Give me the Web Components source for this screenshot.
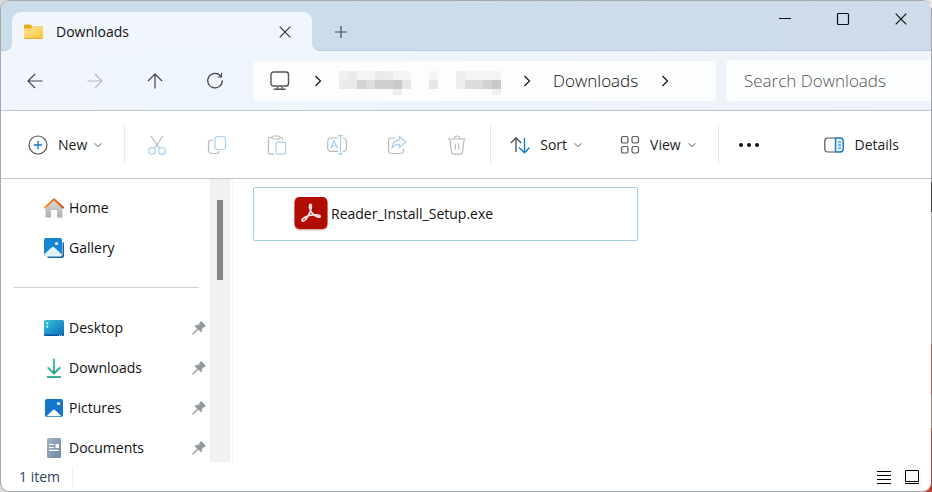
<!DOCTYPE html>
<html lang="en">
<head>
<meta charset="utf-8">
<title>Downloads</title>
<style>
html, body { height: 100%; margin: 0; }
body {
  font-family: "Open Sans", "Noto Sans", sans-serif; font-size: 14px; line-height: 20px; color: #1b1b1b;
  background: linear-gradient(#e6e6e6 8px, #a3a7ad 8px 37%, #3a3a3a 37% 43%, #a5a5a5 43% 70%, #a35555 70% 80%, #a87c7c 80% 87%, #c43c3c 87%) right / 12px 100% no-repeat, #dcdcdc;
}
</style>
</head>
<body>
<file-explorer></file-explorer>
<script>
const ICONS = {
  folder: [20, 16, `<defs><linearGradient id="g" x2="1" y2="1"><stop stop-color="#ffe49a"/><stop offset="1" stop-color="#fdc33a"/></linearGradient></defs><g stroke="none"><path d="M0 1.500Q0 .5 1 .5H6.500L8.500 2.500H18Q19 2.500 19 3.500V8H0Z" fill="#e9ac20"/><path d="M0 4.500H7L8.500 3H18Q19 3 19 4V14Q19 15 18 15H1Q0 15 0 14Z" fill="url(#g)"/></g><path d="M.3 14.500H18.700" stroke="#e8a92c" stroke-width="1"/>`],
  close: [12, 12, `<path d="M.7.7 11.300 11.300M11.300.7.7 11.300"/>`],
  plus: [14, 14, `<path d="M1 7H13M7 1V13"/>`],
  minimize: [12, 12, `<path d="M0 5.500H12"/>`],
  maximize: [14, 14, `<rect x="1.500" y="1.500" width="11" height="11" rx="1"/>`],
  back: [16, 16, `<path d="M15.500 8H1M8 1 1 8 8 15"/>`],
  forward: [16, 16, `<path d="M.5 8H15M8 1 15 8 8 15"/>`],
  up: [16, 16, `<path d="M8 15.500V1M1 8 8 1 15 8"/>`],
  refresh: [18, 18, `<path d="M14.800 4.200A7.300 7.300 0 1 0 16.300 8.300M15.500 1V5H11.500"/>`],
  monitor: [20, 20, `<rect x="1" y="1" width="17.500" height="14" rx="2.500" stroke-width="1.400"/><path d="M7.500 15.500V18M12 15.500V18M3.700 18.300H15.700" stroke-width="1.400"/>`],
  right: [8, 12, `<path d="M1.500 1 6.500 6 1.500 11"/>`],
  down: [8, 8, `<path d="M.7 2.300 4 5.700 7.300 2.300" stroke-width="1"/>`],
  add: [20, 20, `<circle cx="10" cy="10" r="9"/><path d="M10 5.800V14.200M5.800 10H14.200" stroke="#1478c8" stroke-width="1.300"/>`],
  cut: [20, 20, `<path d="M4 1 12.800 14M16 1 7.200 14"/><g stroke="#55a6e2"><circle cx="5" cy="16" r="3.300"/><circle cx="15" cy="16" r="3.300"/></g>`],
  copy: [20, 20, `<path d="M6 5H4Q1.500 5 1.500 8V15Q1.500 18.500 5 18.500H9Q12 18.500 12 16"/><rect x="8" y="1.500" width="10.500" height="13" rx="2.500" stroke="#55a6e2"/>`],
  paste: [20, 20, `<path d="M5 2.500H2.500Q1.500 2.500 1.500 3.500V18Q1.500 19.200 2.700 19.200H7M13 2.500H14.500Q15.500 2.500 15.500 3.500V5"/><rect x="5" y="1" width="8" height="3" rx="1.500"/><rect x="9" y="7.200" width="9.500" height="12" rx="1.500" stroke="#55a6e2"/>`],
  rename: [20, 20, `<path d="M11 3H4Q.7 3 .7 6.500V13Q.7 16.300 4 16.300H11M16 3Q19.400 3 19.400 6.500V13Q19.400 16.300 16 16.300"/><path d="M3.500 13.500 7 5.500 10.500 13.500M4.700 11H9.300M13.500 1V19M11 .7H16M11 19.200H16" stroke="#4fa4e0"/>`],
  share: [20, 20, `<path d="M8 3H4.500Q1.500 3 1.500 6V15Q1.500 18.500 5 18.500H13Q16.500 18.500 16.500 15V13.500"/><path d="M12.500 1.500 18.800 7 12.500 12.500V9.300Q8 9 5 12.500Q5.500 5.500 12.500 4.800Z" stroke="#4fa4e0"/>`],
  trash: [20, 20, `<path d="M1 4H19M7 4Q7 1 10 1T13 4M2.800 4 4.500 17Q4.800 19.200 7 19.200H13Q15.200 19.200 15.500 17L17.200 4M8.300 8.500V14.500M11.700 8.500V14.500"/>`],
  sort: [20, 20, `<path d="M6 17V3M.8 8 6 2.700 11.200 8" stroke-width="1.400"/><path d="M14.500 3V17.500M9 12.500 14.500 17.800 19.600 12.500" stroke="#1478c8" stroke-width="1.400"/>`],
  view: [20, 20, `<rect x="1.500" y="1.500" width="6.500" height="6.500" rx="1.700"/><rect x="12" y="1.500" width="6.500" height="6.500" rx="1.700"/><rect x="1.500" y="11.500" width="6.500" height="6.500" rx="1.700"/><rect x="12" y="11.500" width="6.500" height="6.500" rx="1.700"/>`],
  more: [22, 6, `<g fill="#111" stroke="none"><circle cx="3" cy="3" r="2"/><circle cx="11" cy="3" r="2"/><circle cx="19" cy="3" r="2"/></g>`],
  details: [20, 18, `<path d="M11 2H4Q.8 2 .8 5V13Q.8 16 4 16H11"/><path d="M11.500 2H16Q19.200 2 19.200 5V13Q19.200 16 16 16H11.500Z" fill="#e3f2fd" stroke="#1478c8" stroke-width="1.400"/><path d="M14 6H17M14 9H17M14 12H17" stroke="#1478c8"/>`],
  home: [20, 20, `<defs><linearGradient id="g" x2="0" y2="1"><stop stop-color="#ddd"/><stop offset="1" stop-color="#aeaeae"/></linearGradient><linearGradient id="r" x2="1"><stop stop-color="#f39b35"/><stop offset="1" stop-color="#c9531c"/></linearGradient></defs><path d="M1.500 9 10 2 18.500 9V18.500Q18.500 19.500 17.500 19.500H13V12.500Q13 12 12.500 12H7.500Q7 12 7 12.500V19.500H2.500Q1.500 19.500 1.500 18.500Z" fill="url(#g)" stroke="none"/><path d="M1 9.500 10 1.300 19 9.500" stroke="url(#r)" stroke-width="2.200" stroke-linecap="round" stroke-linejoin="round"/>`],
  gallery: [20, 20, `<g stroke="none"><path d="M4 4H18.500Q20 4 20 5.500V18Q20 20 18 20H5Q3 20 3 18Z" fill="#14669f"/><rect width="18.500" height="18.500" rx="2" fill="#fff"/><rect width="18" height="18" rx="2" fill="#1585d6"/><path d="M0 16.500 7.800 9.300Q9 8.300 10.200 9.300L18 16.500Q17.500 18 16 18H2Q.5 18 0 16.500Z" fill="#e2f2fc"/><circle cx="12.600" cy="5.500" r="1.600" fill="#fff"/></g>`],
  desktop: [20, 16, `<defs><linearGradient id="g" x2="1" y2="1"><stop stop-color="#38c6dc"/><stop offset="1" stop-color="#0969b8"/></linearGradient></defs><g stroke="none"><rect width="20" height="16" rx="1.500" fill="url(#g)"/><path d="M0 14.500H20Q20 16 18.500 16H1.500Q0 16 0 14.500Z" fill="#075397"/><path d="M2.500 2.500H4.200V4.200H2.500ZM2.500 5.700H4.200V7.400H2.500ZM15 14.700H16V15.700H15ZM17 14.700H18V15.700H17Z" fill="#fff"/></g>`],
  download: [20, 20, `<defs><linearGradient id="g" gradientUnits="userSpaceOnUse" x1="0" y1="0" x2="0" y2="20"><stop stop-color="#3cc39b"/><stop offset="1" stop-color="#159b87"/></linearGradient></defs><path d="M10 .5 10.010 15M3.700 9.300 10 15.500 16.300 9.300" stroke="url(#g)" stroke-width="1.800"/><path d="M3 19H17" stroke="#24a88d" stroke-width="1.800"/>`],
  pictures: [20, 20, `<g stroke="none"><rect x="1" y="1" width="18" height="18" rx="2" fill="#1276cb"/><path d="M2.500 18.200 9 12Q10 11 11 12L17.500 18.200Z" fill="#fff"/><circle cx="14.500" cy="5.500" r="1.600" fill="#fff"/></g>`],
  documents: [20, 20, `<defs><linearGradient id="g" x2="1" y2="1"><stop stop-color="#a4b5c8"/><stop offset="1" stop-color="#6c86a3"/></linearGradient></defs><rect x="3" width="14" height="20" rx="1.500" fill="url(#g)" stroke="none"/><path d="M5 6.500H10M5 9.500H10M5 12.300H15" stroke="#fff"/><path d="M11.500 6H15V10H11.500Z" fill="#fff" stroke="none"/>`],
  pin: [14, 14, `<path d="M8.300.5Q9 0 9.600.5L13.300 4.300Q14 5 13.300 5.600L10.500 7 9.700 10.500Q9.300 11.500 8.500 10.800L6.200 8.700 1.500 13.500 .3 13.700 .5 12.500 5.200 7.700 3 5.400Q2.400 4.700 3.300 4.200L6.900 3.400Z" fill="#939ca3" stroke="none"/>`],
  acrobat: [34, 34, `<rect x=".5" y="1.500" width="33" height="32" rx="5" fill="#d9bcb9" stroke="none"/><rect x=".5" y="0" width="33" height="32" rx="5" fill="#b20b00" stroke="none"/><path d="M16.300 7.300C17.800 7 17.500 11 16.600 13.600C15 18 11.500 24.500 8.800 24C6.500 23.400 9.500 19.800 15.500 18.500C20 17.500 26 17.300 26.200 19.300C26.300 21.300 21.500 19.800 18.500 16.600C16 14 14.300 7.700 16.300 7.300Z" stroke="#f7e8e6" stroke-width="1.700"/>`],
  list: [14, 14, `<path d="M0 1.500H14M0 5.500H14M0 9.500H14M0 13.500H14" stroke-width="1"/>`],
  tiles: [14, 14, `<path d="M.5.5H13.500V11.500H.5ZM0 13.500H14" stroke-width="1"/>`]
};

const define = (name, markup) => {
  const template = document.createElement("template");
  template.innerHTML = `<style>*{box-sizing:border-box}button{font:inherit;color:inherit;background:none;border:0;margin:0;padding:0;border-radius:4px}</style>` + markup;
  customElements.define(name, class extends HTMLElement {
    constructor() {
      super();
      this.attachShadow({ mode: "open" }).append(template.content.cloneNode(true));
    }
  });
};

customElements.define("fx-icon", class extends HTMLElement {
  connectedCallback() {
    if (this.shadowRoot) return;
    const [w, h, body] = ICONS[this.getAttribute("name")];
    this.attachShadow({ mode: "open" }).innerHTML = `<style>:host{display:block;flex:none}svg{display:block}</style>
      <svg width="${w}" height="${h}" viewBox="0 0 ${w} ${h}" fill="none" stroke="currentColor" stroke-width="1.200" aria-hidden="true">${body}</svg>`;
  }
});

/* Blurred-out folder names: each hex pair is the grey level of one block */
customElements.define("fx-mosaic", class extends HTMLElement {
  connectedCallback() {
    if (this.shadowRoot) return;
    const rows = this.getAttribute("rows").split("/").map(r => r.split(" "));
    const rects = rows.map((r, y) => r.map((c, x) => c === "--" ? "" :
      `<rect x="${x * 9}" y="${y * 9}" width="9" height="${y === 2 ? 6 : 9}" fill="#${c + c + c}"/>`).join("")).join("");
    this.attachShadow({ mode: "open" }).innerHTML = `<style>:host{display:block;flex:none}svg{display:block}</style>
      <svg width="${rows[0].length * 9}" height="24" shape-rendering="crispEdges" aria-hidden="true">${rects}</svg>`;
  }
});

define("fx-tab", `<style>
  :host{display:flex;position:relative;width:300px;background:#f0f6fc;border-radius:9px 9px 0 0;align-items:center;padding:0 21px 0 12px;gap:12px}
  :host::before,:host::after{content:"";position:absolute;bottom:0;width:6px;height:6px}
  :host::before{right:100%;background:radial-gradient(circle at 0 0,transparent 5px,#f0f6fc 6px)}
  :host::after{left:100%;background:radial-gradient(circle at 100% 0,transparent 5px,#f0f6fc 6px)}
  span{flex:1;color:#111}
  button{color:#333}
  </style><fx-icon name="folder"></fx-icon><span><slot></slot></span><button aria-label="Close tab"><fx-icon name="close"></fx-icon></button>`);

define("fx-titlebar", `<style>
  :host{display:flex;height:50px;flex:none;background:linear-gradient(100deg,#c9dcea,#ccddec 50%,#cedbea);box-shadow:inset 0 -1px #bccbdb;padding-left:11px;align-items:stretch}
  fx-tab{margin-top:11px}
  .new{width:58px;margin-top:11px;display:grid;place-items:center;color:#4a4f55}
  .caption{margin:0 1px 0 auto;display:flex;height:36px}
  .caption button{width:58px;display:grid;place-items:center;color:#111}
  </style><fx-tab>Downloads</fx-tab><button class="new" aria-label="New tab"><fx-icon name="plus"></fx-icon></button>
  <div class="caption"><button aria-label="Minimize"><fx-icon name="minimize"></fx-icon></button><button aria-label="Maximize"><fx-icon name="maximize"></fx-icon></button><button aria-label="Close"><fx-icon name="close"></fx-icon></button></div>`);

define("fx-navbar", `<style>
  :host{display:flex;height:60px;flex:none;background:linear-gradient(90deg,#f0f6fc,#edf4fc 50%,#f0f3f9);border-bottom:1px solid #bfc8d2;align-items:center;padding-left:4px;font-size:17px;font-weight:300}
  .nav{width:60px;height:40px;display:grid;place-items:center;color:#444}
  .nav:disabled{color:#b4b8bd}
  .address{flex:446;height:40px;margin-left:8px;background:#fcfdfe;border-radius:5px;display:flex;align-items:center;padding-left:17px;color:#111}
  fx-icon[name=monitor]{color:#555;margin-right:24px}
  fx-mosaic{margin:4px 18px 0 0}
  fx-mosaic:last-of-type{margin-right:22px}
  .first{margin-right:17px}
  .crumb{margin:0 23px 0 22px}
  input{flex:187;min-width:0;height:41px;margin-left:10px;border:0;border-radius:5px 0 0 5px;background:#fcfdfe;font:inherit;padding:0 0 0 18px;outline:0}
  input::placeholder{color:#555;opacity:1}
  </style>
  <button class="nav" aria-label="Back"><fx-icon name="back"></fx-icon></button><button class="nav" disabled aria-label="Forward"><fx-icon name="forward"></fx-icon></button><button class="nav" aria-label="Up"><fx-icon name="up"></fx-icon></button><button class="nav" aria-label="Refresh"><fx-icon name="refresh"></fx-icon></button>
  <div class="address"><fx-icon name="monitor"></fx-icon><fx-icon class="first" name="right"></fx-icon>
  <fx-mosaic rows="f0 ea f4 f5 e9 ec f4 f6/eb ea d3 dd ce ce c9 e6/-- -- -- -- -- -- ee --"></fx-mosaic><fx-mosaic rows="f5/e6"></fx-mosaic><fx-mosaic rows="ee f4 f4 f4 f4/ee dc dc d1 c8/-- -- -- -- f0"></fx-mosaic>
  <fx-icon name="right"></fx-icon><button class="crumb">Downloads</button><fx-icon name="right"></fx-icon></div>
  <input type="search" placeholder="Search Downloads" aria-label="Search Downloads">`);

define("fx-command", `<style>
  :host{display:block;flex:none}
  button{height:40px;display:flex;align-items:center;justify-content:center;gap:10px;width:100%;white-space:nowrap}
  ::slotted(fx-icon){color:#555}
  :host([disabled]) ::slotted(fx-icon){color:#777;opacity:.5}
  ::slotted(fx-icon[name=down]){margin-left:-3px}
  </style><button><slot></slot></button>`);

define("fx-toolbar", `<style>
  :host{display:flex;height:68px;flex:none;border-bottom:1px solid #bfc8d2;align-items:center;background:#fff;padding:0 32px 0 27px}
  .sq{width:60px}
  hr{border:0;width:1px;height:39px;background:#e8e8e8;margin:0}
  .new{margin-right:22px}.sort{margin:0 38px 0 19px}.view{margin-right:22px}.details{margin-left:auto}
  .gap{margin-left:2px}.end{margin-left:3px}
  </style>
  <fx-command class="new"><fx-icon name="add"></fx-icon>New <fx-icon name="down"></fx-icon></fx-command><hr>
  <fx-command class="sq gap" disabled aria-label="Cut"><fx-icon name="cut"></fx-icon></fx-command><fx-command class="sq" disabled aria-label="Copy"><fx-icon name="copy"></fx-icon></fx-command><fx-command class="sq" disabled aria-label="Paste"><fx-icon name="paste"></fx-icon></fx-command><fx-command class="sq" disabled aria-label="Rename"><fx-icon name="rename"></fx-icon></fx-command><fx-command class="sq" disabled aria-label="Share"><fx-icon name="share"></fx-icon></fx-command><fx-command class="sq" disabled aria-label="Delete"><fx-icon name="trash"></fx-icon></fx-command><hr class="end">
  <fx-command class="sort"><fx-icon name="sort"></fx-icon>Sort<fx-icon name="down"></fx-icon></fx-command>
  <fx-command class="view"><fx-icon name="view"></fx-icon>View<fx-icon name="down"></fx-icon></fx-command><hr>
  <fx-command class="sq" aria-label="More"><fx-icon name="more"></fx-icon></fx-command>
  <fx-command class="details"><fx-icon name="details"></fx-icon>Details</fx-command>`);

define("fx-place", `<style>
  :host{display:block}
  a{display:flex;align-items:center;height:40px;padding:0 4px 0 43px;gap:5px;color:#111;text-decoration:none}
  .label{flex:1}
  .pin{display:none}
  :host([pinned]) .pin{display:block}
  </style><a href="#"><slot name="icon"></slot><span class="label"><slot></slot></span><fx-icon class="pin" name="pin"></fx-icon></a>`);

define("fx-sidebar", `<style>
  :host{display:flex;width:232px;flex:none;border-right:1px solid #f3f3f3;overflow:hidden}
  nav{flex:1;padding-top:9px}
  hr{border:0;height:1px;background:#d0d0d0;margin:19px 11px 20px 13px}
  .scroll{width:20px;margin-right:2px;background:#f0f0f0;display:flex;justify-content:center;padding-top:21px}
  .thumb{width:6px;height:80px;background:#858585}
  </style><nav aria-label="Places">
  <fx-place><fx-icon slot="icon" name="home"></fx-icon>Home</fx-place>
  <fx-place><fx-icon slot="icon" name="gallery"></fx-icon>Gallery</fx-place><hr>
  <fx-place pinned><fx-icon slot="icon" name="desktop"></fx-icon>Desktop</fx-place>
  <fx-place pinned><fx-icon slot="icon" name="download"></fx-icon>Downloads</fx-place>
  <fx-place pinned><fx-icon slot="icon" name="pictures"></fx-icon>Pictures</fx-place>
  <fx-place pinned><fx-icon slot="icon" name="documents"></fx-icon>Documents</fx-place>
  </nav><div class="scroll"><div class="thumb"></div></div>`);

define("fx-file", `<style>
  :host{display:flex;align-items:center;gap:3px;width:385px;height:54px;border:1px solid #a6cde8;border-radius:2px;padding-left:40px;color:#111}
  </style><fx-icon name="acrobat"></fx-icon><span><slot></slot></span>`);

define("fx-statusbar", `<style>
  :host{display:flex;height:29px;flex:none;align-items:center;padding:0 9px 0 18px;color:#2f4560}
  span{padding-right:12px;border-right:1px solid #f0f0f0;flex:none}
  div{margin-left:auto;display:flex;gap:8px}
  button{width:20px;height:20px;display:grid;place-items:center;color:#000;background:#fafafa}
  </style><span>1 item</span><div><button aria-label="Details view"><fx-icon name="list"></fx-icon></button><button aria-label="Large icons view"><fx-icon name="tiles"></fx-icon></button></div>`);

define("file-explorer", `<style>
  :host{display:flex;flex-direction:column;box-sizing:border-box;height:100vh;border:1px solid #a6a9ac;border-right-color:transparent;border-radius:9px;overflow:hidden;background:#fff padding-box}
  .body{flex:1;min-height:0;display:flex}
  main{flex:1;padding:8px 0 0 20px}
  </style><fx-titlebar></fx-titlebar><fx-navbar></fx-navbar><fx-toolbar></fx-toolbar>
  <div class="body"><fx-sidebar></fx-sidebar><main><fx-file>Reader_Install_Setup.exe</fx-file></main></div><fx-statusbar></fx-statusbar>`);
</script>
</body>
</html>
